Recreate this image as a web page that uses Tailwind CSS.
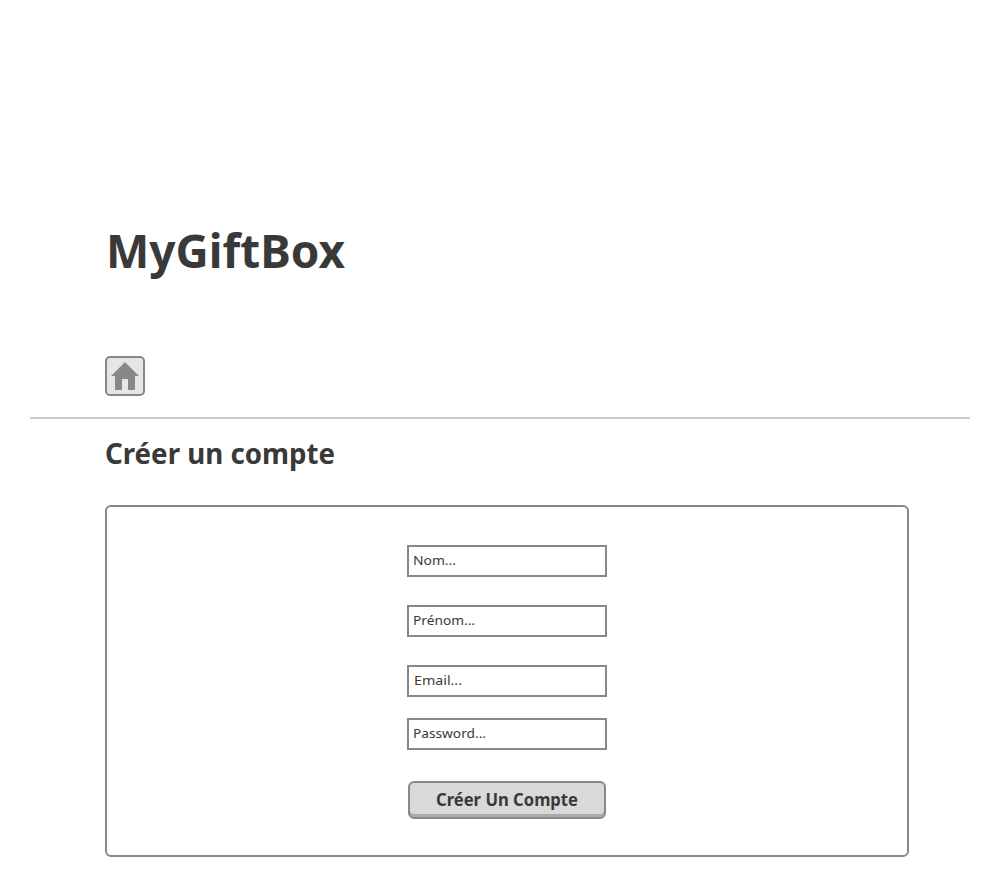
<!DOCTYPE html>
<html lang="fr">
<head>
<meta charset="utf-8">
<title>MyGiftBox</title>
<script src="https://cdn.jsdelivr.net/npm/@tailwindcss/browser@4"></script>
</head>
<body class="bg-white font-['Noto_Sans',sans-serif] text-[#393939]">
<div class="h-[877px] overflow-hidden pt-[216px]">
  <header class="pr-5 pl-[30px]">
    <h1 class="ml-[76px] h-[70px] text-[46px] leading-[70px] font-bold whitespace-nowrap"><svg class="block overflow-visible" width="239" height="70"><text x="0" y="52" textLength="239" lengthAdjust="spacingAndGlyphs" fill="currentColor">MyGiftBox</text></svg></h1>
    <a class="mt-[70px] ml-[75px] flex size-10 items-center justify-center rounded-[5px] border-2 border-[#888] bg-[#e6e6e6]" href="#" aria-label="Accueil">
      <svg width="28" height="28" viewBox="0 0 28 28" fill="#888"><path d="M14 0 28 14H24V28H17V17H11V28H4V14H0Z"/></svg>
    </a>
    <div class="mt-[21px] h-[2px] bg-[#ccc]"></div>
  </header>
  <main class="pl-[105px]">
    <h2 class="mt-[12px] h-[48px] text-[28.5px] font-bold"><svg class="block overflow-visible" width="230" height="48"><text x="0" y="33" textLength="230" lengthAdjust="spacingAndGlyphs" fill="currentColor">Créer un compte</text></svg></h2>
    <form class="mt-[26px] flex h-[352px] w-[804px] flex-col items-center rounded-[6px] border-2 border-[#888] pt-[38px] text-[13px]">
      <div class="h-8 w-[200px] border-2 border-[#888] px-1"><svg class="block overflow-visible" width="43" height="28"><text x="0" y="18" textLength="43" lengthAdjust="spacingAndGlyphs" fill="currentColor">Nom...</text></svg></div>
      <div class="mt-7 h-8 w-[200px] border-2 border-[#888] px-1"><svg class="block overflow-visible" width="62" height="28"><text x="0" y="18" textLength="62" lengthAdjust="spacingAndGlyphs" fill="currentColor">Prénom...</text></svg></div>
      <div class="mt-7 h-8 w-[200px] border-2 border-[#888] px-[5px]"><svg class="block overflow-visible" width="48" height="28"><text x="0" y="18" textLength="48" lengthAdjust="spacingAndGlyphs" fill="currentColor">Email...</text></svg></div>
      <div class="mt-[21px] h-8 w-[200px] border-2 border-[#888] px-1"><svg class="block overflow-visible" width="73" height="28"><text x="0" y="18" textLength="73" lengthAdjust="spacingAndGlyphs" fill="currentColor">Password...</text></svg></div>
      <button type="button" class="mt-[31px] flex h-[38px] w-[198px] justify-center rounded-[6px] border-2 border-[#888] bg-[#d9d9d9] text-[17px] font-bold shadow-[inset_0_-3px_0_#aaa]"><svg class="block overflow-visible" width="142" height="34"><text x="0" y="23" textLength="142" lengthAdjust="spacingAndGlyphs" fill="currentColor">Créer Un Compte</text></svg></button>
    </form>
  </main>
</div>
</body>
</html>
